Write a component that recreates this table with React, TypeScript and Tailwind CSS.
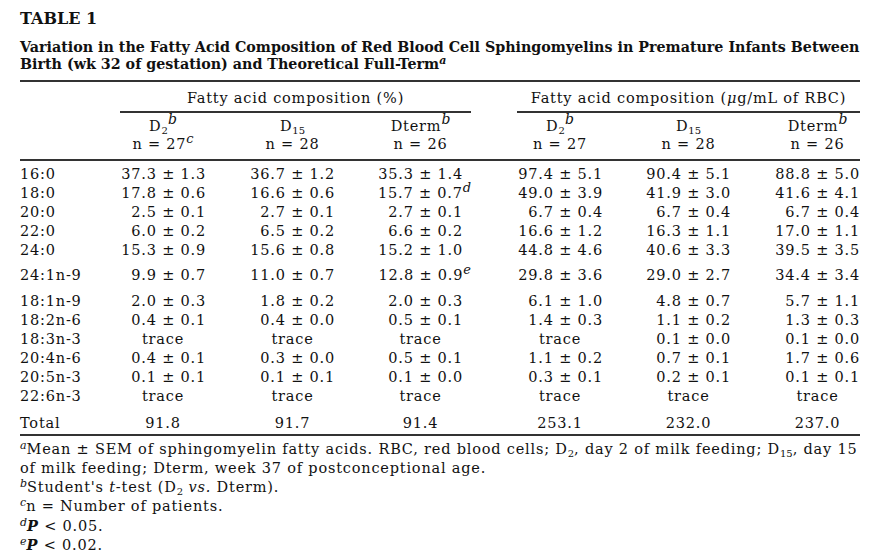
import React from "react";

const F = { fontFamily: '"DejaVu Serif", serif' };

type Cell = string;
const rows: { label: string; cells: Cell[]; gap?: string }[] = [
  { label: "16:0", cells: ["37.3 ± 1.3", "36.7 ± 1.2", "35.3 ± 1.4", "97.4 ± 5.1", "90.4 ± 5.1", "88.8 ± 5.0"] },
  { label: "18:0", cells: ["17.8 ± 0.6", "16.6 ± 0.6", "15.7 ± 0.7|d", "49.0 ± 3.9", "41.9 ± 3.0", "41.6 ± 4.1"] },
  { label: "20:0", cells: ["2.5 ± 0.1", "2.7 ± 0.1", "2.7 ± 0.1", "6.7 ± 0.4", "6.7 ± 0.4", "6.7 ± 0.4"] },
  { label: "22:0", cells: ["6.0 ± 0.2", "6.5 ± 0.2", "6.6 ± 0.2", "16.6 ± 1.2", "16.3 ± 1.1", "17.0 ± 1.1"] },
  { label: "24:0", cells: ["15.3 ± 0.9", "15.6 ± 0.8", "15.2 ± 1.0", "44.8 ± 4.6", "40.6 ± 3.3", "39.5 ± 3.5"] },
  { label: "24:1n-9", gap: "mt-[6px]", cells: ["9.9 ± 0.7", "11.0 ± 0.7", "12.8 ± 0.9|e", "29.8 ± 3.6", "29.0 ± 2.7", "34.4 ± 3.4"] },
  { label: "18:1n-9", gap: "mt-[7px]", cells: ["2.0 ± 0.3", "1.8 ± 0.2", "2.0 ± 0.3", "6.1 ± 1.0", "4.8 ± 0.7", "5.7 ± 1.1"] },
  { label: "18:2n-6", cells: ["0.4 ± 0.1", "0.4 ± 0.0", "0.5 ± 0.1", "1.4 ± 0.3", "1.1 ± 0.2", "1.3 ± 0.3"] },
  { label: "18:3n-3", cells: ["trace", "trace", "trace", "trace", "0.1 ± 0.0", "0.1 ± 0.0"] },
  { label: "20:4n-6", cells: ["0.4 ± 0.1", "0.3 ± 0.0", "0.5 ± 0.1", "1.1 ± 0.2", "0.7 ± 0.1", "1.7 ± 0.6"] },
  { label: "20:5n-3", cells: ["0.1 ± 0.1", "0.1 ± 0.1", "0.1 ± 0.0", "0.3 ± 0.1", "0.2 ± 0.1", "0.1 ± 0.1"] },
  { label: "22:6n-3", cells: ["trace", "trace", "trace", "trace", "trace", "trace"] },
];

const pads = ["pl-0", "pl-[44px]", "pl-[43px]", "pl-[54px]", "pl-[43px]", "pl-[44px]"];
const grid = "grid grid-cols-[100px_86px_129px_128px_140px_128px_129px]";

function Sup({ c }: { c: string }) {
  return <sup className="italic text-[11px] tracking-normal">{c}</sup>;
}

function Sub({ c }: { c: string }) {
  return <sub className="text-[10px] tracking-normal">{c}</sub>;
}

function DataCell({ v, i, center }: { v: string; i: number; center?: boolean }) {
  const [val, sup] = v.split("|");
  const isCenter = center || val === "trace";
  return (
    <div className={`${pads[i]} ${isCenter ? "text-center" : "text-right"} h-[19px] whitespace-nowrap`}>
      {val}
      {sup && <sup className="italic text-[13px] tracking-normal -mr-[8px]">{sup}</sup>}
    </div>
  );
}

export default function App() {
  return (
    <div className="w-[881px] h-[558px] bg-white text-[#111] overflow-hidden px-[20px] pt-[9px]" style={F}>
      <div className="font-bold text-[16px] leading-[20px]">TABLE 1</div>
      <div className="mt-[10px] font-bold text-[14.28px] leading-[17px] whitespace-nowrap">
        Variation in the Fatty Acid Composition of Red Blood Cell Sphingomyelins in Premature Infants Between
        <br />
        Birth (wk 32 of gestation) and Theoretical Full-Term
        <sup className="italic text-[11px]">a</sup>
      </div>
      <div className="mt-[7px] w-[840px] h-[2px] bg-[#333]" />

      <div className="text-[14.5px] tracking-[0.8px] w-[840px]">
        <div className={`${grid} pt-[7px] leading-[19px]`}>
          <div />
          <div className="col-span-3 -mr-[8px] text-center border-b-2 border-[#333] pb-[3px]">
            Fatty acid composition (%)
          </div>
          <div className="col-span-3 ml-[54px] text-center border-b-2 border-[#333] pb-[3px]">
            Fatty acid composition (<span className="italic">μ</span>g/mL of RBC)
          </div>
        </div>

        <div className={`${grid} mt-[4px] leading-[18px]`}>
          <div className="h-[18px]" />
          {[
            ["D", "2", "b"],
            ["D", "15", ""],
            ["Dterm", "", "b"],
            ["D", "2", "b"],
            ["D", "15", ""],
            ["Dterm", "", "b"],
          ].map(([t, sub, sup], i) => (
            <div key={i} className={`${pads[i]} text-center h-[18px] whitespace-nowrap`}>
              {t}
              {sub && <Sub c={sub} />}
              {sup && <sup className="italic text-[14px] tracking-normal">{sup}</sup>}
            </div>
          ))}
          <div className="h-[18px]" />
          {["27|c", "28", "26", "27", "28", "26"].map((v, i) => {
            const [n, s] = v.split("|");
            return (
              <div key={i} className={`${pads[i]} text-center h-[18px] whitespace-nowrap`}>
                n = {n}
                {s && <sup className="italic text-[13px] tracking-normal">{s}</sup>}
              </div>
            );
          })}
        </div>
        <div className="mt-[6px] h-[2px] bg-[#333]" />

        <div className="pt-[4px] leading-[19px]">
          {rows.map((r) => (
            <div key={r.label} className={`${grid} ${r.gap ?? ""}`}>
              <div className="h-[19px]">{r.label}</div>
              {r.cells.map((c, i) => (
                <DataCell key={i} v={c} i={i} />
              ))}
            </div>
          ))}
          <div className={`${grid} mt-[8px]`}>
            <div className="h-[19px]">Total</div>
            {["91.8", "91.7", "91.4", "253.1", "232.0", "237.0"].map((c, i) => (
              <DataCell key={i} v={c} i={i} center />
            ))}
          </div>
        </div>
        <div className="mt-[1px] h-[2px] bg-[#333]" />

        <div className="pt-[4px] leading-[19px] whitespace-nowrap">
          <div className="h-[19px]">
            <Sup c="a" />
            Mean ± SEM of sphingomyelin fatty acids. RBC, red blood cells; D<Sub c="2" />, day 2 of milk feeding; D
            <Sub c="15" />, day 15
          </div>
          <div className="h-[19px]">of milk feeding; Dterm, week 37 of postconceptional age.</div>
          <div className="h-[19px]">
            <Sup c="b" />
            Student's <span className="italic">t</span>-test (D<Sub c="2" /> <span className="italic">vs.</span> Dterm).
          </div>
          <div className="h-[19px]">
            <Sup c="c" />n = Number of patients.
          </div>
          <div className="h-[19px]">
            <Sup c="d" />
            <span className="italic font-bold">P</span> &lt; 0.05.
          </div>
          <div className="h-[19px]">
            <Sup c="e" />
            <span className="italic font-bold">P</span> &lt; 0.02.
          </div>
        </div>
      </div>
    </div>
  );
}
